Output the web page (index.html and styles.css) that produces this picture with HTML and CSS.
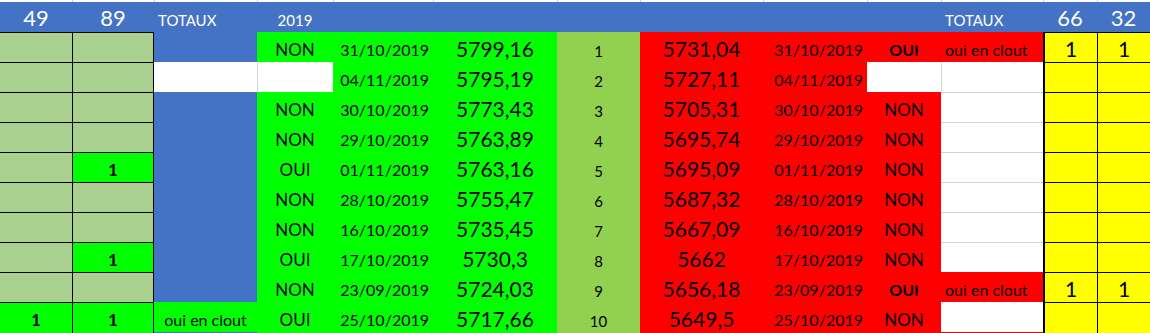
FILE: index.html
```html
<!DOCTYPE html>
<html lang="fr">
<head>
<meta charset="utf-8">
<title>Totaux 2019</title>
<link rel="stylesheet" href="styles.css">
</head>
<body>
<div class="sheet">
  <!-- top gridline strip -->
  <div class="g first"></div><div class="g"></div><div class="g"></div><div class="g"></div><div class="g"></div><div class="g"></div><div class="g"></div><div class="g"></div><div class="g"></div><div class="g"></div><div class="g"></div><div class="g"></div><div class="g"></div>

  <!-- header -->
  <div class="c hd big">49</div>
  <div class="c hd big">89</div>
  <div class="c hd left">TOTAUX</div>
  <div class="c hd">2019</div>
  <div class="c hd"></div>
  <div class="c hd"></div>
  <div class="c hd"></div>
  <div class="c hd"></div>
  <div class="c hd"></div>
  <div class="c hd"></div>
  <div class="c hd left">TOTAUX</div>
  <div class="c hd big">66</div>
  <div class="c hd big">32</div>

  <!-- row 1 -->
  <div class="c pale"></div>
  <div class="c pale col1"></div>
  <div class="c blue"></div>
  <div class="c lime w">NON</div>
  <div class="c lime right">31/10/2019</div>
  <div class="c lime num">5799,16</div>
  <div class="c leaf rank">1</div>
  <div class="c red num">5731,04</div>
  <div class="c red right">31/10/2019</div>
  <div class="c red b">OUI</div>
  <div class="c red left">oui en clout</div>
  <div class="c yel y1 num">1</div>
  <div class="c yel y2 num">1</div>

  <!-- row 2 -->
  <div class="c pale"></div>
  <div class="c pale col1"></div>
  <div class="c white"></div>
  <div class="c white gl"></div>
  <div class="c lime right">04/11/2019</div>
  <div class="c lime num">5795,19</div>
  <div class="c leaf rank">2</div>
  <div class="c red num">5727,11</div>
  <div class="c red right">04/11/2019</div>
  <div class="c white"></div>
  <div class="c white gl"></div>
  <div class="c yel y1"></div>
  <div class="c yel y2"></div>

  <!-- row 3 -->
  <div class="c pale"></div>
  <div class="c pale col1"></div>
  <div class="c blue"></div>
  <div class="c lime w">NON</div>
  <div class="c lime right">30/10/2019</div>
  <div class="c lime num">5773,43</div>
  <div class="c leaf rank">3</div>
  <div class="c red num">5705,31</div>
  <div class="c red right">30/10/2019</div>
  <div class="c red w">NON</div>
  <div class="c white gt"></div>
  <div class="c yel y1"></div>
  <div class="c yel y2"></div>

  <!-- row 4 -->
  <div class="c pale"></div>
  <div class="c pale col1"></div>
  <div class="c blue"></div>
  <div class="c lime w">NON</div>
  <div class="c lime right">29/10/2019</div>
  <div class="c lime num">5763,89</div>
  <div class="c leaf rank">4</div>
  <div class="c red num">5695,74</div>
  <div class="c red right">29/10/2019</div>
  <div class="c red w">NON</div>
  <div class="c white gt"></div>
  <div class="c yel y1"></div>
  <div class="c yel y2"></div>

  <!-- row 5 -->
  <div class="c pale"></div>
  <div class="c hit col1">1</div>
  <div class="c blue"></div>
  <div class="c lime w">OUI</div>
  <div class="c lime right">01/11/2019</div>
  <div class="c lime num">5763,16</div>
  <div class="c leaf rank">5</div>
  <div class="c red num">5695,09</div>
  <div class="c red right">01/11/2019</div>
  <div class="c red w">NON</div>
  <div class="c white gt"></div>
  <div class="c yel y1"></div>
  <div class="c yel y2"></div>

  <!-- row 6 -->
  <div class="c pale"></div>
  <div class="c pale col1"></div>
  <div class="c blue"></div>
  <div class="c lime w">NON</div>
  <div class="c lime right">28/10/2019</div>
  <div class="c lime num">5755,47</div>
  <div class="c leaf rank">6</div>
  <div class="c red num">5687,32</div>
  <div class="c red right">28/10/2019</div>
  <div class="c red w">NON</div>
  <div class="c white gt"></div>
  <div class="c yel y1"></div>
  <div class="c yel y2"></div>

  <!-- row 7 -->
  <div class="c pale"></div>
  <div class="c pale col1"></div>
  <div class="c blue"></div>
  <div class="c lime w">NON</div>
  <div class="c lime right">16/10/2019</div>
  <div class="c lime num">5735,45</div>
  <div class="c leaf rank">7</div>
  <div class="c red num">5667,09</div>
  <div class="c red right">16/10/2019</div>
  <div class="c red w">NON</div>
  <div class="c white gt"></div>
  <div class="c yel y1"></div>
  <div class="c yel y2"></div>

  <!-- row 8 -->
  <div class="c pale"></div>
  <div class="c hit col1">1</div>
  <div class="c blue"></div>
  <div class="c lime w">OUI</div>
  <div class="c lime right">17/10/2019</div>
  <div class="c lime num">5730,3</div>
  <div class="c leaf rank">8</div>
  <div class="c red num">5662</div>
  <div class="c red right">17/10/2019</div>
  <div class="c red w">NON</div>
  <div class="c white gt"></div>
  <div class="c yel y1"></div>
  <div class="c yel y2"></div>

  <!-- row 9 -->
  <div class="c pale"></div>
  <div class="c pale col1"></div>
  <div class="c blue"></div>
  <div class="c lime w">NON</div>
  <div class="c lime right">23/09/2019</div>
  <div class="c lime num">5724,03</div>
  <div class="c leaf rank">9</div>
  <div class="c red num">5656,18</div>
  <div class="c red right">23/09/2019</div>
  <div class="c red b">OUI</div>
  <div class="c red left">oui en clout</div>
  <div class="c yel y1 num">1</div>
  <div class="c yel y2 num">1</div>

  <!-- row 10 -->
  <div class="c hit">1</div>
  <div class="c hit col1">1</div>
  <div class="c lime">oui en clout</div>
  <div class="c lime w">OUI</div>
  <div class="c lime right">25/10/2019</div>
  <div class="c lime num">5717,66</div>
  <div class="c leaf rank">10</div>
  <div class="c red num">5649,5</div>
  <div class="c red right">25/10/2019</div>
  <div class="c red w">NON</div>
  <div class="c white"></div>
  <div class="c yel y1"></div>
  <div class="c yel y2"></div>

  <!-- next row, partly visible -->
  <div class="s lime"></div>
  <div class="s lime col1"></div>
  <div class="s blue"></div>
  <div class="s lime"></div>
  <div class="s lime"></div>
  <div class="s lime"></div>
  <div class="s leaf"></div>
  <div class="s red"></div>
  <div class="s red"></div>
  <div class="s red"></div>
  <div class="s red"></div>
  <div class="s yel y1"></div>
  <div class="s yel y2"></div>
</div>
</body>
</html>
```

FILE: styles.css
```css
html, body {
  margin: 0;
  padding: 0;
  background: #ffffff;
  overflow: hidden;
}

body {
  font-family: Lato, "Liberation Sans", sans-serif;
  color: #000;
}

.sheet {
  display: grid;
  grid-template-columns: 72px 82px 103px 76px 100px 124px 83px 123px 104px 74px 102px 54px 53px;
  grid-template-rows: 2px 30px repeat(10, 30px) 1px;
  width: 1150px;
  height: 333px;
}

/* top gridline strip */
.g {
  background: #ffffff;
  border-left: 1px solid #d4d4d4;
  box-sizing: border-box;
}
.g.first { border-left: 0; }

/* generic cell */
.c {
  box-sizing: border-box;
  display: flex;
  align-items: flex-end;
  justify-content: center;
  padding-bottom: 4px;
  border-top: 1px solid transparent;
  line-height: 1;
  font-size: 16px;
  white-space: nowrap;
  overflow: hidden;
}

.s {
  box-sizing: border-box;
}

/* header */
.hd {
  background: #4472c4;
  color: #ffffff;
  border-top: 0;
  font-size: 15px;
}
.hd.big { font-size: 22px; padding-bottom: 3px; }

.left { justify-content: flex-start; padding-left: 4px; }
.right { justify-content: flex-end; padding-right: 4px; }

/* fills */
.blue { background: #4472c4; }
.lime { background: #00ff00; }
.leaf { background: #92d050; }
.red { background: #ff0000; }
.white { background: #ffffff; }
.yel { background: #ffff00; }

.pale {
  background: #a9d08e;
  border-top-color: #000;
}

.hit {
  background: #00ff00;
  border-top-color: #000;
  font-weight: 700;
  font-size: 17px;
}

.col1 {
  border-left: 1px solid #000;
  border-right: 1px solid #000;
}

.yel.c { border-top-color: #000; }
.y1 { border-left: 2px solid #000; }
.y2 { border-left: 1px solid #000; }

/* gridlines shown in unfilled cells */
.gl { border-left: 1px solid #d4d4d4; }
.gt { border-top-color: #d4d4d4; }

/* text styles */
.w { font-size: 17px; }
.num { font-size: 21px; padding-bottom: 3px; }
.rank { font-size: 15px; padding-bottom: 3px; }
.b { font-weight: 700; }
```
